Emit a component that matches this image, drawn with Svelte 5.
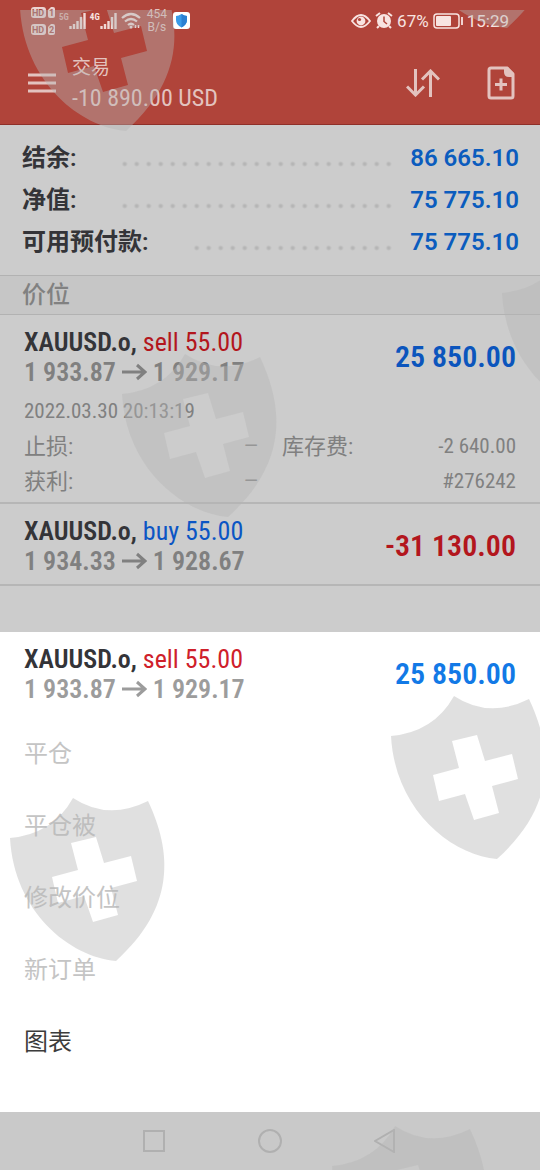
<script lang="ts">
	const balances = [
		{ label: `结余:`, value: `86 665.10` },
		{ label: `净值:`, value: `75 775.10` },
		{ label: `可用预付款:`, value: `75 775.10` },
	];

	const positions = [
		{
			symbol: `XAUUSD.o,`,
			side: `sell`,
			volume: `55.00`,
			open: `1 933.87`,
			current: `1 929.17`,
			profit: `25 850.00`,
			time: `2022.03.30 20:13:19`,
			details: [
				{ label: `止损:`, value: `—` },
				{ label: `库存费:`, value: `-2 640.00` },
				{ label: `获利:`, value: `—` },
				{ label: ``, value: `#276242` },
			],
		},
		{
			symbol: `XAUUSD.o,`,
			side: `buy`,
			volume: `55.00`,
			open: `1 934.33`,
			current: `1 928.67`,
			profit: `-31 130.00`,
		},
	];

	const actions = [
		{ label: `平仓`, disabled: true },
		{ label: `平仓被`, disabled: true },
		{ label: `修改价位`, disabled: true },
		{ label: `新订单`, disabled: true },
		{ label: `图表`, disabled: false },
	];

	const shields = [
		[20, -43],
		[401, -146],
		[502, 242],
		[122, 343],
		[391, 685],
		[10, 787],
		[332, 1115],
	];
</script>

{#snippet summary(position)}
	<div class="summary">
		<div>
			<div class="symbol">
				<strong>{position.symbol}</strong>
				<span class={position.side}>{position.side} {position.volume}</span>
			</div>
			<div class="prices">
				{position.open}
				<svg width="25" height="18" viewBox="0 0 25 18" aria-hidden="true">
					<path d="M0 9h23M15 2l8 7-8 7" fill="none" stroke="currentColor" stroke-width="3" />
				</svg>
				{position.current}
			</div>
		</div>
		<div class="profit {position.profit.startsWith(`-`) ? `loss` : ``}">{position.profit}</div>
	</div>
{/snippet}

<div class="screen">
	<header>
		<div class="status">
			<div class="status__group">
				<svg width="24" height="28" viewBox="0 0 24 28" aria-hidden="true">
					<g fill="#ecd3d0">
						<rect width="15" height="11" rx="3" />
						<path d="M17 3l3-3h2q2 0 2 2v7q0 2-2 2h-3q-2 0-2-2z" />
						<rect y="17" width="15" height="11" rx="3" />
						<path d="M17 20l3-3h2q2 0 2 2v7q0 2-2 2h-3q-2 0-2-2z" />
					</g>
					<g fill="#a4473f" font-family="Roboto, sans-serif" font-size="9" font-weight="700">
						<text x="1" y="9">HD</text>
						<text x="18" y="9">1</text>
						<text x="1" y="26">HD</text>
						<text x="18" y="26">2</text>
					</g>
				</svg>
				{#each [`5G`, `4G`] as network}
					<div class="signal {network == `5G` ? `` : `active`}">
						<span class="network">{network}</span>
						<svg width="17" height="16" viewBox="0 0 17 16" aria-hidden="true">
							<path d="M1.5 16v-3M5 16v-5M8.5 16v-8M12 16v-12M15.5 16v-16" stroke="#f0d9d6" stroke-width="2.4" />
						</svg>
					</div>
				{/each}
				<svg width="20" height="17" viewBox="0 0 20 17" aria-hidden="true">
					<path d="M1 6q9-8 18 0M4 9.5q6-5 12 0M7 13q3-2.5 6 0" fill="none" stroke="#f0d9d6" stroke-width="2.2" />
					<circle cx="10" cy="15" r="1.5" fill="#f0d9d6" />
					<path d="M14.5 13v3M17.5 13v3" stroke="#f0d9d6" stroke-width="1.5" />
				</svg>
				<span class="speed">454<br />B/s</span>
				<svg width="17" height="17" viewBox="0 0 17 17" aria-hidden="true">
					<rect width="17" height="17" rx="3" fill="#fff" />
					<path d="M8.5 2q3 2 5.5 2v4q0 5-5.5 7.5Q3 13 3 8V4q2.5 0 5.5-2z" fill="#3a9be8" />
					<path d="M8.5 2q3 2 5.5 2v4q0 5-5.5 7.5z" fill="#2b80d2" />
				</svg>
			</div>
			<div class="status__group status__group--end">
				<svg width="20" height="14" viewBox="0 0 20 14" aria-hidden="true">
					<path d="M1 7q9-12 18 0-9 12-18 0z" fill="none" stroke="#f8e4e1" stroke-width="1.8" />
					<circle cx="10" cy="7" r="4.4" fill="#f8e4e1" />
					<circle cx="8.5" cy="5.5" r="1.6" fill="#b0443a" />
				</svg>
				<svg width="18" height="17" viewBox="0 0 18 17" aria-hidden="true">
					<circle cx="9" cy="9" r="7" fill="#f8e4e1" />
					<path d="M1 4l4-3M17 4l-4-3M4 14l-2 2M14 14l2 2" stroke="#f8e4e1" stroke-width="2" />
					<path d="M9 4.5v5l3 2.5" fill="none" stroke="#b0443a" stroke-width="1.5" />
				</svg>
				<span>67%</span>
				<svg width="30" height="16" viewBox="0 0 30 16" aria-hidden="true">
					<rect x="1" y="1" width="25" height="14" rx="3" fill="none" stroke="#f8e4e1" stroke-width="1.5" />
					<rect x="3" y="3" width="15" height="10" rx="1" fill="#f8e4e1" />
					<path d="M29 4v8" stroke="#f8e4e1" stroke-width="1.8" />
				</svg>
				<span>15:29</span>
			</div>
		</div>
		<div class="toolbar">
			<button aria-label="菜单">
				<svg width="28" height="20" viewBox="0 0 28 20">
					<path d="M0 2h28M0 10h28M0 18h28" stroke="currentColor" stroke-width="3" />
				</svg>
			</button>
			<div class="title">
				<h1>交易</h1>
				<p>-10 890.00 USD</p>
			</div>
			<button aria-label="排序">
				<svg width="34" height="28" viewBox="0 0 34 28" fill="none" stroke="currentColor" stroke-width="3">
					<path d="M9.5 0v26M1 17.5l8.5 8.5 8.5-8.5M24.5 28v-26M16 10.5l8.5-8.5 8.5 8.5" />
				</svg>
			</button>
			<button aria-label="新订单">
				<svg width="28" height="34" viewBox="0 0 28 34" fill="none" stroke="currentColor" stroke-width="3">
					<path d="M4 2h16l6 6v22q0 2-2 2H4q-2 0-2-2V4q0-2 2-2zM14 12.5v12M8 18.5h12" />
					<path d="M17 1h4l6 6v4h-5q-5 0-5-5z" fill="currentColor" stroke="none" />
				</svg>
			</button>
		</div>
	</header>

	<main>
		<section class="balances">
			{#each balances as balance}
				<div class="balance">
					<span>{balance.label}</span>
					<span class="dots"></span>
					<span class="balance__value">{balance.value}</span>
				</div>
			{/each}
		</section>
		<h2>价位</h2>
		{#each positions as position}
			<article>
				{@render summary(position)}
				{#if position.details}
					<div class="time">{position.time}</div>
					<div class="details">
						{#each position.details as detail}
							<div class="detail">
								<span class="detail__label">{detail.label}</span>
								<span>{detail.value}</span>
							</div>
						{/each}
					</div>
				{/if}
			</article>
		{/each}
	</main>

	<section class="sheet">
		{@render summary(positions[0])}
		<div class="actions">
			{#each actions as action}
				<button disabled={action.disabled}>{action.label}</button>
			{/each}
		</div>
	</section>

	<nav>
		<button aria-label="最近">
			<svg width="24" height="24" viewBox="0 0 24 24"><rect x="2" y="2" width="20" height="20" /></svg>
		</button>
		<button aria-label="主页">
			<svg width="24" height="24" viewBox="0 0 24 24"><circle cx="12" cy="12" r="11" /></svg>
		</button>
		<button aria-label="返回">
			<svg width="24" height="24" viewBox="0 0 24 24"><path d="M20 1v22L1 12z" /></svg>
		</button>
	</nav>

	<svg class="watermark" aria-hidden="true">
		{#each shields as [x, y]}
			<path
				transform="translate({x} {y})"
				fill-rule="evenodd"
				d="M63 1Q98 24 138 4C162 55 166 110 106 164C60 160 4 115 0 41Q43 37 63 1zM61 46L86 40L94 66L121 59L127 84L101 91L108 118L83 125L74 99L48 106L42 80L68 73z"
			/>
		{/each}
	</svg>
</div>

<style>
	:global(body) {
		background-color: #cccccc;
	}

	.screen {
		position: relative;
		display: flex;
		flex-direction: column;
		min-height: 100vh;
		overflow: hidden;
		font-family: "Roboto Condensed", "Liberation Sans Narrow", Roboto, "Noto Sans CJK SC", sans-serif;
		color: #343438;
	}

	button {
		display: flex;
		padding: 0;
		border: none;
		background: none;
		color: inherit;
		font: inherit;
		cursor: pointer;
	}

	h1,
	h2,
	p {
		margin: 0;
		font-weight: 400;
	}

	header {
		background-color: #b0443a;
		border-bottom: 1px solid #8f3029;
		color: #e3c3bf;
	}

	.status {
		display: flex;
		justify-content: space-between;
		align-items: center;
		height: 41px;
		padding: 0 31px;
		font-family: Roboto, sans-serif;
	}
	.status__group {
		display: flex;
		align-items: center;
		gap: 4px;
	}
	.status__group--end {
		color: #f8e4e1;
		font-size: 17px;
	}
	.signal {
		display: flex;
		align-items: flex-start;
		color: #d9a8a2;
	}
	.signal.active {
		color: #f8e4e1;
	}
	.network {
		font-family: "Roboto Condensed", Roboto, sans-serif;
		font-size: 9px;
		font-weight: 700;
		line-height: 8px;
	}
	.speed {
		padding: 0 2px;
		font-size: 12px;
		line-height: 13px;
		text-align: center;
	}

	.toolbar {
		display: flex;
		align-items: center;
		height: 83px;
		padding: 0 25px 0 28px;
	}
	.title {
		flex: 1;
		padding-left: 16px;
	}
	.title h1 {
		font-size: 19px;
		line-height: 30px;
	}
	.title p {
		font-size: 24px;
		line-height: 30px;
	}
	.toolbar button + button {
		margin-left: 47px;
	}

	main {
		flex: 1;
	}

	.balances {
		padding: 12px 21px 12px 22px;
		font-family: Roboto, "Noto Sans CJK SC", sans-serif;
		font-size: 24px;
		font-weight: 600;
		line-height: 42px;
	}
	.balance {
		display: flex;
	}
	.dots {
		flex: 1;
		margin: 0 16px 0 40px;
		background: radial-gradient(circle at 6px 27px, #b5b5b5 1px, transparent 3px) right top / 12px 42px repeat-x;
	}
	.balance__value {
		color: #0b5cbe;
	}

	h2 {
		padding: 0 22px;
		border: solid #b2b2b2;
		border-width: 1px 0;
		background-color: #c6c6c6;
		color: #818181;
		font-size: 24px;
		font-weight: 500;
		line-height: 38px;
	}

	article {
		padding-bottom: 3px;
		border-bottom: 2px solid #b6b6b6;
	}

	.summary {
		display: flex;
		justify-content: space-between;
		align-items: center;
		padding: 12px 24px 5px;
		font-size: 26px;
		line-height: 30px;
	}
	.symbol strong,
	.prices {
		font-weight: 600;
	}
	.prices {
		color: #808080;
	}
	.sell {
		color: #b3161d;
	}
	.buy {
		color: #0b55c4;
	}
	.profit {
		color: #0b55bd;
		font-size: 30px;
		font-weight: 600;
	}
	.loss {
		color: #b3161d;
	}

	.time,
	.details {
		padding: 0 24px;
		color: #808080;
		font-size: 21px;
		line-height: 35px;
	}
	.time {
		padding-top: 2px;
	}
	.details {
		display: grid;
		grid-template-columns: 1fr 1fr;
		column-gap: 24px;
	}
	.detail {
		display: flex;
		justify-content: space-between;
	}
	.detail__label {
		font-size: 22px;
	}

	.sheet {
		background-color: #ffffff;
		padding-bottom: 34px;
	}
	.sheet .prices {
		color: #9c9c9c;
	}
	.sheet .sell {
		color: #cf202a;
	}
	.sheet .profit {
		color: #1279e6;
	}
	.actions {
		padding-top: 9px;
	}
	.actions button {
		width: 100%;
		padding: 0 24px;
		color: #3c3c3c;
		font-size: 24px;
		line-height: 72px;
	}
	.actions button:disabled {
		color: #c4c4c4;
		cursor: default;
	}

	nav {
		display: flex;
		justify-content: center;
		align-items: center;
		gap: 92px;
		height: 58px;
		background-color: #c9c9c9;
	}
	nav svg {
		fill: none;
		stroke: #b0b0b0;
		stroke-width: 2px;
	}

	.watermark {
		position: absolute;
		top: 10px;
		left: 0;
		width: 100%;
		height: calc(100% - 10px);
		overflow: hidden;
		fill: rgba(181, 181, 181, 0.42);
		pointer-events: none;
	}
</style>
